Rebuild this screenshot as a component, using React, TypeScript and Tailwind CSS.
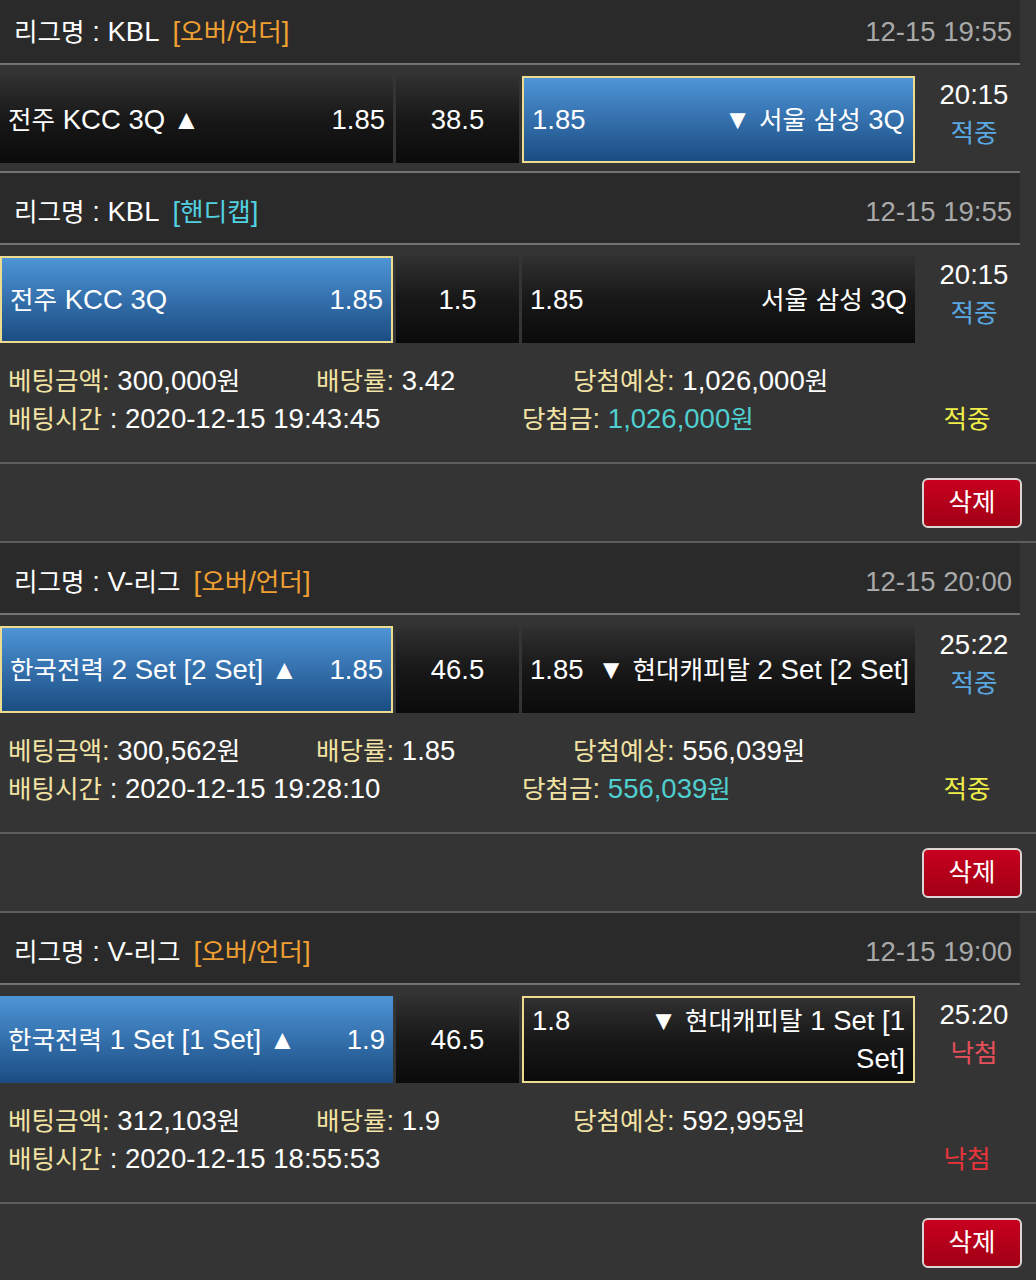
import React from "react";

const HANGUL = /([\uAC00-\uD7A3\u3131-\u318E]+)/;

function T({ s }: { s: string }) {
  const parts = s.split(HANGUL);
  return (
    <>
      {parts.map((p, i) =>
        i % 2 === 1 ? (
          <span key={i} className="text-[0.93em] leading-none">
            {p}
          </span>
        ) : (
          <React.Fragment key={i}>{p}</React.Fragment>
        )
      )}
    </>
  );
}

type SideData = {
  lines: string[];
  odds: string;
  tone: "blue" | "black";
  sel?: boolean;
};

type Match = {
  league: string;
  kind: string;
  kindTone: "orange" | "cyan";
  date: string;
  left: SideData;
  mid: string;
  right: SideData;
  time: string;
  result: string;
  resultTone: "blue" | "red";
};

type Info = {
  amount: string;
  rate: string;
  expect: string;
  at: string;
  win?: string;
  status: string;
  statusTone: "yellow" | "red";
};

type Group = { matches: Match[]; info: Info };

const groups: Group[] = [
  {
    matches: [
      {
        league: "KBL",
        kind: "[오버/언더]",
        kindTone: "orange",
        date: "12-15 19:55",
        left: { lines: ["전주 KCC 3Q ▲"], odds: "1.85", tone: "black" },
        mid: "38.5",
        right: { lines: ["▼ 서울 삼성 3Q"], odds: "1.85", tone: "blue", sel: true },
        time: "20:15",
        result: "적중",
        resultTone: "blue",
      },
      {
        league: "KBL",
        kind: "[핸디캡]",
        kindTone: "cyan",
        date: "12-15 19:55",
        left: { lines: ["전주 KCC 3Q"], odds: "1.85", tone: "blue", sel: true },
        mid: "1.5",
        right: { lines: ["서울 삼성 3Q"], odds: "1.85", tone: "black" },
        time: "20:15",
        result: "적중",
        resultTone: "blue",
      },
    ],
    info: {
      amount: "300,000원",
      rate: "3.42",
      expect: "1,026,000원",
      at: "2020-12-15 19:43:45",
      win: "1,026,000원",
      status: "적중",
      statusTone: "yellow",
    },
  },
  {
    matches: [
      {
        league: "V-리그",
        kind: "[오버/언더]",
        kindTone: "orange",
        date: "12-15 20:00",
        left: { lines: ["한국전력 2 Set [2 Set] ▲"], odds: "1.85", tone: "blue", sel: true },
        mid: "46.5",
        right: { lines: ["▼ 현대캐피탈 2 Set [2 Set]"], odds: "1.85", tone: "black" },
        time: "25:22",
        result: "적중",
        resultTone: "blue",
      },
    ],
    info: {
      amount: "300,562원",
      rate: "1.85",
      expect: "556,039원",
      at: "2020-12-15 19:28:10",
      win: "556,039원",
      status: "적중",
      statusTone: "yellow",
    },
  },
  {
    matches: [
      {
        league: "V-리그",
        kind: "[오버/언더]",
        kindTone: "orange",
        date: "12-15 19:00",
        left: { lines: ["한국전력 1 Set [1 Set] ▲"], odds: "1.9", tone: "blue" },
        mid: "46.5",
        right: { lines: ["▼ 현대캐피탈 1 Set [1", "Set]"], odds: "1.8", tone: "black", sel: true },
        time: "25:20",
        result: "낙첨",
        resultTone: "red",
      },
    ],
    info: {
      amount: "312,103원",
      rate: "1.9",
      expect: "592,995원",
      at: "2020-12-15 18:55:53",
      status: "낙첨",
      statusTone: "red",
    },
  },
];

function Header({ m, first }: { m: Match; first: boolean }) {
  return (
    <div
      className={`w-[1020px] h-[70px] bg-[#2a2a2a] flex items-center justify-between pl-[14px] pr-[8px] pt-[7px] ${
        first ? "-mt-[7px]" : ""
      }`}
    >
      <div className="text-white whitespace-nowrap">
        <T s={`리그명 : ${m.league}`} />
        <span className={`ml-[13px] ${m.kindTone === "orange" ? "text-[#f0a032]" : "text-[#52d0e0]"}`}>
          <T s={m.kind} />
        </span>
      </div>
      <div className="text-[#a9a9a9]">{m.date}</div>
    </div>
  );
}

function Lines({ lines, align }: { lines: string[]; align: "left" | "right" }) {
  return (
    <span className={align === "right" ? "text-right" : "text-left"}>
      {lines.map((l, i) => (
        <div key={i} className="h-[38px] whitespace-nowrap">
          <T s={l} />
        </div>
      ))}
    </span>
  );
}

function SideCell({ side, oddsFirst }: { side: SideData; oddsFirst: boolean }) {
  const bg =
    side.tone === "blue"
      ? "bg-linear-to-b from-[#4e95d7] to-[#1b4d83]"
      : "bg-linear-to-b from-[#313131] via-[#181818] to-[#0b0b0b]";
  const bd = side.sel ? "border-2 border-[#eddc8f]" : "";
  const odds = <span className="h-[38px] whitespace-nowrap">{side.odds}</span>;
  return (
    <div className={`w-[393px] h-[87px] shrink-0 flex items-center px-[8px] text-white ${bg} ${bd}`}>
      <div className="flex w-full items-start justify-between gap-[14px]">
        {oddsFirst ? (
          <>
            {odds}
            <Lines lines={side.lines} align="right" />
          </>
        ) : (
          <>
            <Lines lines={side.lines} align="left" />
            {odds}
          </>
        )}
      </div>
    </div>
  );
}

function MatchRow({ m }: { m: Match }) {
  return (
    <div className="w-[1020px] h-[106px] pt-[11px] pb-[8px] flex gap-[3px]">
      <SideCell side={m.left} oddsFirst={false} />
      <div className="w-[123px] h-[87px] shrink-0 flex items-center justify-center text-white bg-linear-to-b from-[#313131] via-[#181818] to-[#0b0b0b]">
        {m.mid}
      </div>
      <SideCell side={m.right} oddsFirst={true} />
      <div className="flex-1 h-[87px] pl-[10px] flex flex-col items-center">
        <div className="h-[38px] text-white">{m.time}</div>
        <div className={`h-[38px] ${m.resultTone === "blue" ? "text-[#5aa8e2]" : "text-[#e5505a]"}`}>
          <T s={m.result} />
        </div>
      </div>
    </div>
  );
}

function Label({ s }: { s: string }) {
  return (
    <span className="text-[#f2e3a4]">
      <T s={s} />
    </span>
  );
}

function InfoBlock({ info }: { info: Info }) {
  return (
    <div className="h-[111px] pt-[11px] text-white whitespace-nowrap">
      <div className="h-[38px] flex pl-[8px]">
        <div className="w-[308px]">
          <Label s="베팅금액:" /> <T s={info.amount} />
        </div>
        <div className="w-[257px]">
          <Label s="배당률:" /> {info.rate}
        </div>
        <div>
          <Label s="당첨예상:" /> <T s={info.expect} />
        </div>
      </div>
      <div className="h-[38px] flex pl-[8px]">
        <div className="w-[514px]">
          <Label s="배팅시간" /> : {info.at}
        </div>
        <div className="flex-1">
          {info.win && (
            <>
              <Label s="당첨금:" />{" "}
              <span className="text-[#4fcfcf]">
                <T s={info.win} />
              </span>
            </>
          )}
        </div>
        <div
          className={`w-[92px] mr-[23px] text-center ${
            info.statusTone === "yellow" ? "text-[#efee48]" : "text-[#e8343a]"
          }`}
        >
          <T s={info.status} />
        </div>
      </div>
    </div>
  );
}

export default function App() {
  return (
    <div className="w-full min-h-screen bg-[#343434] overflow-hidden font-['Liberation_Sans','DejaVu_Sans','Noto_Sans_CJK_KR',sans-serif] text-[27.5px] leading-[38px]">
      {groups.map((g, gi) => (
        <div key={gi}>
          {g.matches.map((m, mi) => (
            <div key={mi}>
              {mi > 0 && <div className="w-[1020px] h-[2px] bg-[#737373]" />}
              <Header m={m} first={gi === 0 && mi === 0} />
              <div className="w-[1020px] h-[2px] bg-[#737373]" />
              <MatchRow m={m} />
            </div>
          ))}
          <InfoBlock info={g.info} />
          <div className="w-full h-[2px] bg-[#5d5d5d]" />
          <div className="h-[77px] flex items-center justify-end pr-[14px]">
            <button className="w-[100px] h-[50px] rounded-[6px] border-2 border-[#dcd3d3] bg-linear-to-b from-[#c8001f] to-[#a10015] text-white flex items-center justify-center leading-none">
              <T s="삭제" />
            </button>
          </div>
          <div className="w-full h-[2px] bg-[#5d5d5d]" />
        </div>
      ))}
    </div>
  );
}
